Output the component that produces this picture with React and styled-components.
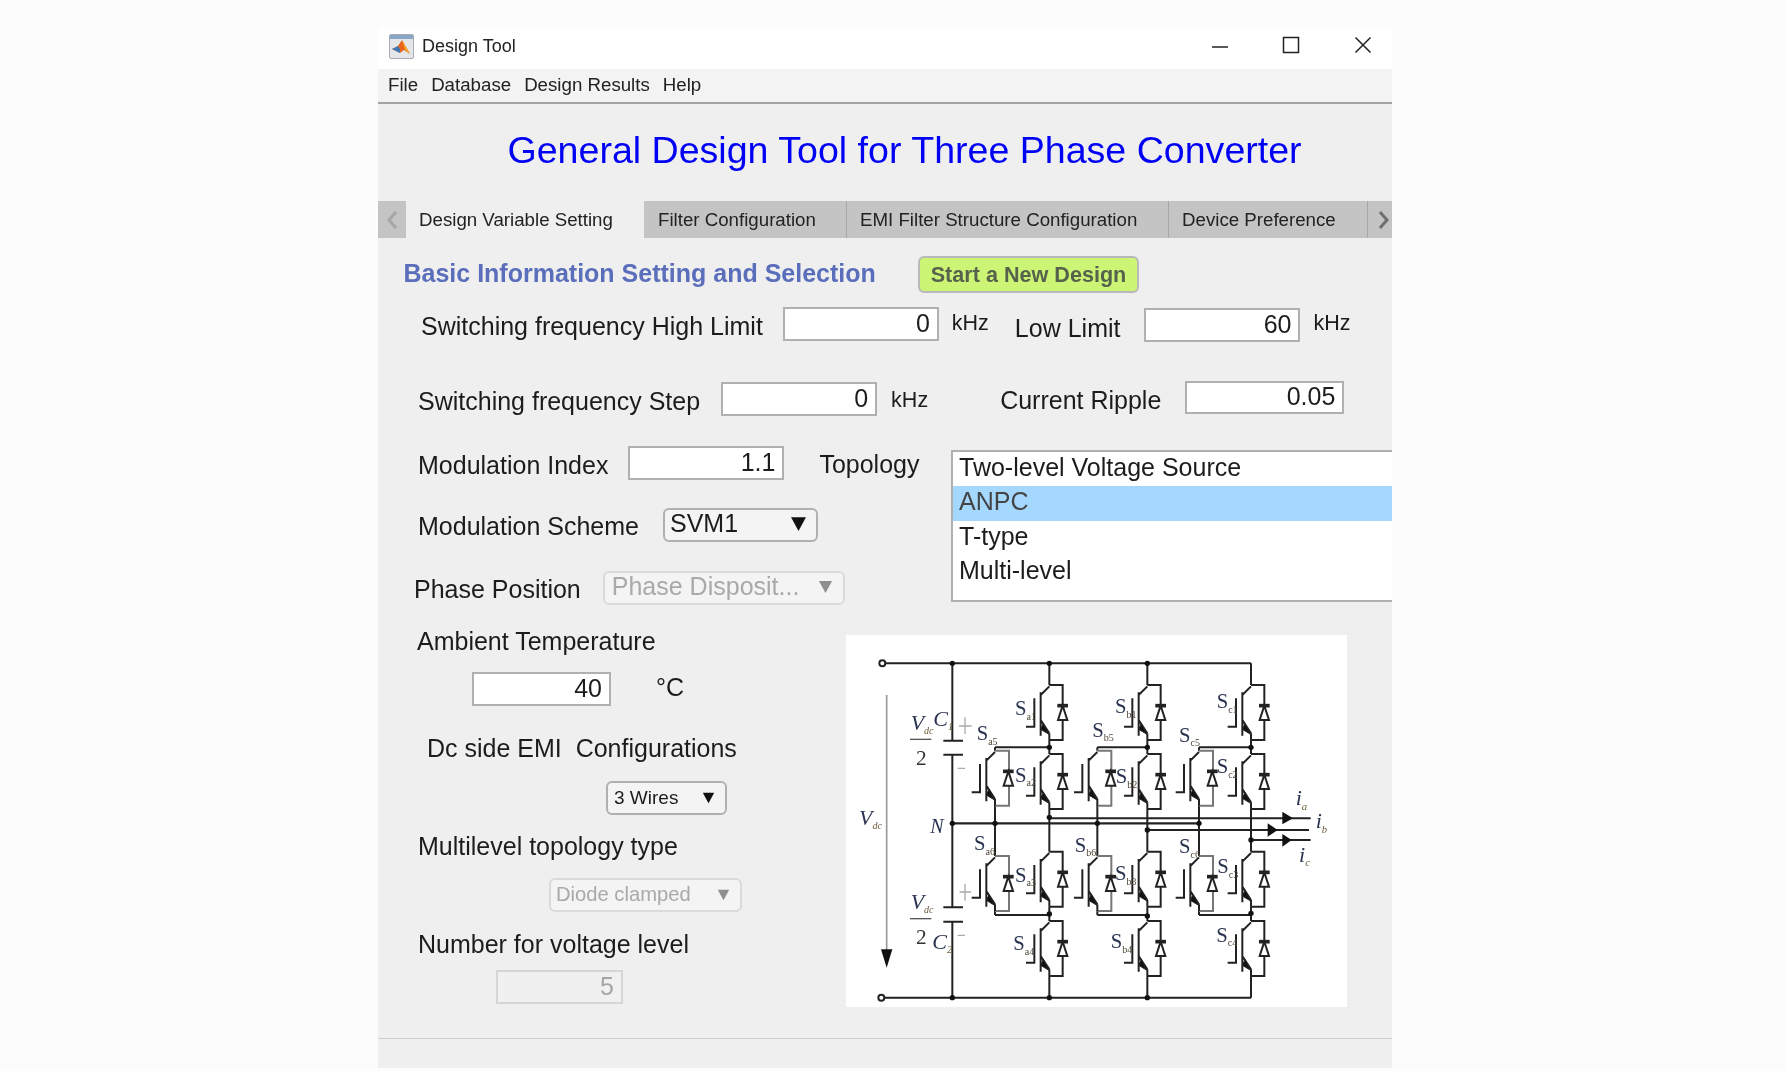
import styled, { createGlobalStyle } from "styled-components";

const GlobalStyle = createGlobalStyle`
  html, body {
    margin: 0;
    background: #fcfcfc;
    font-family: "Liberation Sans", Arial, sans-serif;
    color: #1c1c1c;
  }
`;

const Page = styled.div`
  width: 1786px;
  height: 1071px;
  padding: 28px 0 0 378px;
  box-sizing: border-box;
  overflow: hidden;
`;

const Window = styled.div`
  width: 1014px;
  height: 1040px;
  background: #efefef;
  filter: blur(0.45px);
`;

const TitleBar = styled.div`
  height: 41px;
  padding: 0 0 4px 11px;
  box-sizing: border-box;
  background: #fff;
  display: flex;
  align-items: center;
  font-size: 18px;
  color: #222;
`;

const TitleText = styled.span`
  margin-left: 8px;
  flex: 1;
`;

const WinButton = styled.svg`
  width: 18px;
  height: 18px;
  margin-right: ${(p) => p.$mr}px;
  margin-bottom: 4px;
  fill: none;
  stroke: #222;
  stroke-width: 1.5;
`;

const MenuBar = styled.div`
  height: 31px;
  padding: 0 0 2px 10px;
  background: #f3f3f3;
  border-bottom: 2px solid #a2a2a2;
  display: flex;
  align-items: center;
  gap: 13px;
  font-size: 18.7px;
  color: #222;
`;

const Heading = styled.h1`
  height: 97px;
  margin: 0;
  padding: 23px 0 0 129.5px;
  box-sizing: border-box;
  font-size: 37.57px;
  line-height: 46px;
  font-weight: 400;
  color: #0000f5;
`;

const TabBar = styled.div`
  height: 37px;
  background: #c4c4c4;
  display: flex;
  align-items: stretch;
  font-size: 18.7px;
  color: #222;
`;

const TabArrow = styled.div`
  width: ${(p) => p.$w}px;
  padding-left: ${(p) => p.$pl || 0}px;
  box-sizing: border-box;
  display: flex;
  align-items: center;
  justify-content: center;
  color: ${(p) => p.$color};
`;

const Tab = styled.div`
  width: ${(p) => p.$w}px;
  padding-left: ${(p) => p.$pl}px;
  box-sizing: border-box;
  display: flex;
  align-items: center;
  background: ${(p) => (p.$active ? "#efefef" : "transparent")};
  border-right: ${(p) => (p.$divider ? "1px solid #a8a8a8" : "none")};
`;

const Panel = styled.div`
  height: 800px;
  overflow: hidden;
`;

const Row = styled.div`
  display: flex;
  align-items: flex-start;
  margin-top: ${(p) => p.$mt || 0}px;
  height: ${(p) => p.$h || 34}px;
`;

const SectionTitle = styled.div`
  margin-left: 25.5px;
  width: 514.5px;
  font-size: 25px;
  line-height: 35px;
  font-weight: 700;
  color: #5a6ebb;
`;

const StartButton = styled.button`
  width: 221px;
  height: 37px;
  padding: 0;
  background: #ccf576;
  border: 2px solid #b9b9b9;
  border-radius: 6px;
  font-family: inherit;
  font-size: 21.6px;
  font-weight: 700;
  color: #56624c;
`;

const Label = styled.span`
  margin-left: ${(p) => p.$ml || 0}px;
  margin-top: ${(p) => p.$top || 0}px;
  font-size: ${(p) => p.$size || 25}px;
  line-height: 34px;
  white-space: pre;
  color: #1c1c1c;
`;

const Field = styled.input`
  width: ${(p) => p.$w}px;
  height: ${(p) => p.$h || 34}px;
  margin-left: ${(p) => p.$ml || 0}px;
  margin-top: ${(p) => p.$top || 0}px;
  padding: 0 7px 2px 0;
  box-sizing: border-box;
  flex: none;
  text-align: right;
  font-family: inherit;
  font-size: 25px;
  color: #1c1c1c;
  background: #fff;
  border: 2px solid #b0b0b0;
  border-radius: 0;
  outline: none;
  &:disabled {
    color: #a6a6a6;
    background: #f0f0f0;
    border-color: #d6d6d6;
  }
`;

const Select = styled.div`
  width: ${(p) => p.$w}px;
  height: ${(p) => p.$h || 34}px;
  margin-left: ${(p) => p.$ml || 0}px;
  padding: 0 ${(p) => p.$arrowRight || 10}px ${(p) => p.$pb ?? 3}px ${(p) => p.$pl || 5}px;
  box-sizing: border-box;
  flex: none;
  display: flex;
  align-items: center;
  justify-content: space-between;
  font-size: ${(p) => p.$size || 25}px;
  color: ${(p) => (p.$disabled ? "#a9a9a9" : "#1c1c1c")};
  background: #f4f4f4;
  border: 2px solid ${(p) => (p.$disabled ? "#dadada" : "#b0b0b0")};
  border-radius: 6px;
`;

const Arrow = styled.svg`
  width: ${(p) => p.$w}px;
  height: ${(p) => p.$w}px;
  fill: ${(p) => (p.$disabled ? "#8f8f8f" : "#111")};
`;

const Columns = styled.div`
  display: grid;
  grid-template-columns: ${(p) => p.$left}px ${(p) => p.$right}px;
  margin-top: ${(p) => p.$mt}px;
`;

const Stack = styled.div`
  display: flex;
  flex-direction: column;
`;

const ListBox = styled.div`
  height: 152px;
  margin-top: 4px;
  box-sizing: border-box;
  background: #fff;
  border: 2px solid #b0b0b0;
  border-right: none;
  font-size: 25px;
  color: #1c1c1c;
`;

const ListItem = styled.div`
  height: 34.4px;
  line-height: 31.5px;
  padding-left: 6px;
  background: ${(p) => (p.$selected ? "#a5d8ff" : "transparent")};
  color: ${(p) => (p.$selected ? "#444" : "inherit")};
`;

const Diagram = styled.svg`
  display: block;
  width: 501px;
  height: 372px;
  margin-top: 12px;
  background: #fff;
  filter: blur(0.6px);
  font-family: "Liberation Serif", "Times New Roman", serif;
`;

const Footer = styled.div`
  height: 30px;
  border-top: 1px solid #cfcfcf;
  box-sizing: border-box;
`;

function MatlabIcon() {
  return (
    <svg width="25" height="25" viewBox="0 0 25 25">
      <rect x="0.5" y="0.5" width="24" height="24" rx="1.5" fill="#e4e6ea" stroke="#a9adb3" />
      <rect x="1" y="1" width="23" height="4" fill="#8aa6c6" />
      <path d="M3 15 L9 12 L13 6 L17 13 L21 20 L15 16 L11 19 Z" fill="#e8641c" />
      <path d="M3 15 L9 12 L11 15 L11 19 Z" fill="#3f78b5" />
      <path d="M13 6 L17 13 L21 20 L16 16 Z" fill="#f4a62a" />
    </svg>
  );
}

function DownArrow({ size, disabled }) {
  return (
    <Arrow $w={size} $disabled={disabled} viewBox="0 0 16 16">
      <path d="M1 2 H15 L8 15 Z" />
    </Arrow>
  );
}

// one IGBT with its antiparallel diode, x = rail, y = collector
function Igbt({ x, y, light, h = 165 }) {
  return (
    <g transform={`translate(${x} ${y})`}>
      <path d={`M0 0 H${light ? 42 : 40} V${h} H0`} stroke={light ? "#777" : "#222"} />
      <path d="M0 4 L-26 30 M-26 22 V152 M-45 40 V125 H-70 M-26 105 L0 145" />
      <path d={`M0 145 V${h}`} />
      <path d="M-18 116 L-1 148 L-26 133 Z" fill="#111" strokeWidth="3" />
      <path d="M40 62 L26 105 H54 Z" fill="#fff" strokeWidth="6" />
      <path d="M24 62 H56" strokeWidth="11" />
    </g>
  );
}

function SwitchName({ x, y, sub }) {
  return (
    <text x={x} y={y} fontSize="62" fill="#2a3350" stroke="none">
      S
      <tspan dy="14" fontSize="30" fill="#4d4636">
        {sub}
      </tspan>
    </text>
  );
}

function Fraction({ x, y }) {
  return (
    <g>
      <text x={x} y={y} fontSize="66" fontStyle="italic" fill="#2a3350" stroke="none">
        V
        <tspan dy="12" fontSize="30" fill="#6b5a3c">
          dc
        </tspan>
      </text>
      <path d={`M${x - 2} ${y + 28} h64`} stroke="#555" strokeWidth="4" />
      <text x={x + 16} y={y + 104} fontSize="64" fill="#333" stroke="none">
        2
      </text>
    </g>
  );
}

const names = [
  [528, 255, "a1"], [828, 250, "b1"], [1133, 235, "c1"],
  [413, 330, "a5"], [760, 320, "b5"], [1020, 335, "c5"],
  [528, 455, "a2"], [830, 460, "b2"], [1133, 430, "c2"],
  [405, 660, "a6"], [707, 665, "b6"], [1020, 670, "c6"],
  [528, 755, "a3"], [828, 750, "b3"], [1135, 730, "c3"],
  [523, 960, "a4"], [815, 955, "b4"], [1132, 935, "c4"],
];

function Converter() {
  const outer = [631, 925, 1236];
  const inner = [468, 775, 1080];
  return (
    <Diagram viewBox="21 15 1503 1116">
      <g fill="none" stroke="#222" strokeWidth="6">
        <path d="M140 100 H1236 M137 1103 H1236" />
        <circle cx="130" cy="100" r="9" />
        <circle cx="127" cy="1103" r="9" />
        <path d="M340 100 V332 M313 332 H372 M313 374 H372 M340 374 V832 M313 832 H372 M313 875 H372 M340 875 V1103" />
        <path d="M340 580 H1080" strokeWidth="7" />
        <path d="M631 565 H1415 M925 600 H1410 M1236 630 H1415" />
        {outer.map((x) => (
          <g key={x}>
            <path d={`M${x} 100 V165 M${x} 330 V372 M${x} 537 V665 M${x} 830 V873 M${x} 1038 V1103`} />
            <Igbt x={x} y={165} />
            <Igbt x={x} y={372} />
            <Igbt x={x} y={665} />
            <Igbt x={x} y={873} />
          </g>
        ))}
        {inner.map((x, i) => (
          <g key={x}>
            <path d={`M${x} 352 H${outer[i]} M${x} 855 H${outer[i]} M${x} 352 V362 M${x} 525 V678 M${x} 843 V855`} />
            <Igbt x={x} y={362} light />
            <Igbt x={x} y={678} light />
          </g>
        ))}
        <path d="M143 195 V965" stroke="#999" strokeWidth="5" />
        <path d="M126 958 H160 L143 1013 Z" fill="#111" stroke="none" />
        <path d="M1330 545 L1362 565 L1330 583 Z M1286 580 L1316 600 L1286 620 Z M1330 612 L1358 630 L1330 650 Z" fill="#111" stroke="none" />
        <path d="M360 288 H398 M378 262 V312 M356 415 H378 M362 786 H396 M378 762 V812 M356 916 H378" stroke="#aaa" strokeWidth="4" />
        <g fill="#111" stroke="none">
          {[[340, 100], [631, 100], [925, 100], [340, 1103], [631, 1103], [925, 1103], [631, 352], [925, 352], [1236, 352], [631, 852], [925, 858], [1236, 850], [340, 580], [468, 580], [775, 580], [1080, 580], [631, 562], [925, 600], [1236, 630]].map(([cx, cy]) => (
            <circle key={`${cx}-${cy}`} cx={cx} cy={cy} r="8" />
          ))}
        </g>
      </g>
      {names.map(([x, y, sub]) => (
        <SwitchName key={sub} x={x} y={y} sub={sub} />
      ))}
      <Fraction x={215} y={300} />
      <Fraction x={215} y={838} />
      <text x="60" y="585" fontSize="66" fontStyle="italic" fill="#2a3350">
        V
        <tspan dy="12" fontSize="30" fill="#6b5a3c">dc</tspan>
      </text>
      <text x="283" y="288" fontSize="66" fontStyle="italic" fill="#2a3350">
        C
        <tspan dy="12" fontSize="30" fill="#6b5a3c">1</tspan>
      </text>
      <text x="280" y="958" fontSize="66" fontStyle="italic" fill="#2a3350">
        C
        <tspan dy="12" fontSize="30" fill="#6b5a3c">2</tspan>
      </text>
      <text x="274" y="610" fontSize="60" fontStyle="italic" fill="#2a3350">N</text>
      <text x="1370" y="525" fontSize="66" fontStyle="italic" fill="#2a3350">
        i
        <tspan dy="14" fontSize="32" fill="#6b5a3c">a</tspan>
      </text>
      <text x="1430" y="595" fontSize="66" fontStyle="italic" fill="#2a3350">
        i
        <tspan dy="14" fontSize="32" fill="#6b5a3c">b</tspan>
      </text>
      <text x="1380" y="695" fontSize="66" fontStyle="italic" fill="#2a3350">
        i
        <tspan dy="14" fontSize="32" fill="#6b5a3c">c</tspan>
      </text>
    </Diagram>
  );
}

export default function App() {
  return (
    <>
      <GlobalStyle />
      <Page>
        <Window>
          <TitleBar>
            <MatlabIcon />
            <TitleText>Design Tool</TitleText>
            <WinButton $mr={53} viewBox="0 0 18 18">
              <path d="M1 11 H17" />
            </WinButton>
            <WinButton $mr={54} viewBox="0 0 18 18">
              <rect x="1.5" y="1.5" width="15" height="15" />
            </WinButton>
            <WinButton $mr={20} viewBox="0 0 18 18">
              <path d="M1.5 1.5 L16.5 16.5 M16.5 1.5 L1.5 16.5" />
            </WinButton>
          </TitleBar>
          <MenuBar>
            <span>File</span>
            <span>Database</span>
            <span>Design Results</span>
            <span>Help</span>
          </MenuBar>
          <Heading>General Design Tool for Three Phase Converter</Heading>
          <TabBar>
            <TabArrow $w={28} $color="#a5a5a5">
              <svg width="12" height="20" viewBox="0 0 12 20" fill="none" stroke="currentColor" strokeWidth="3">
                <path d="M10 2 L3 10 L10 18" />
              </svg>
            </TabArrow>
            <Tab $w={238} $pl={13} $active>Design Variable Setting</Tab>
            <Tab $w={203} $pl={14} $divider>Filter Configuration</Tab>
            <Tab $w={322} $pl={13} $divider>EMI Filter Structure Configuration</Tab>
            <Tab $w={199} $pl={13} $divider>Device Preference</Tab>
            <TabArrow $w={24} $pl={7} $color="#6f6f6f">
              <svg width="12" height="20" viewBox="0 0 12 20" fill="none" stroke="currentColor" strokeWidth="3">
                <path d="M2 2 L9 10 L2 18" />
              </svg>
            </TabArrow>
          </TabBar>
          <Panel>
            <Row $mt={18} $h={37}>
              <SectionTitle>Basic Information Setting and Selection</SectionTitle>
              <StartButton>Start a New Design</StartButton>
            </Row>
            <Row $mt={14} $h={36}>
              <Label $ml={43} $top={2}>Switching frequency High Limit</Label>
              <Field $ml={20} $w={156} defaultValue="0" readOnly />
              <Label $ml={13} $top={-1} $size={21.5}>kHz</Label>
              <Label $ml={26} $top={4}>Low Limit</Label>
              <Field $ml={24} $top={1} $w={156} defaultValue="60" readOnly />
              <Label $ml={13} $top={-1} $size={21.5}>kHz</Label>
            </Row>
            <Row $mt={38}>
              <Label $ml={40} $top={3}>Switching frequency Step</Label>
              <Field $ml={21} $top={1} $w={156} defaultValue="0" readOnly />
              <Label $ml={14} $top={2} $size={21.5}>kHz</Label>
              <Label $ml={72} $top={2}>Current Ripple</Label>
              <Field $ml={24} $w={159} $h={33} defaultValue="0.05" readOnly />
            </Row>
            <Columns $left={573} $right={441} $mt={31}>
              <Stack>
                <Row>
                  <Label $ml={40} $top={2}>Modulation Index</Label>
                  <Field $ml={20} $w={156} defaultValue="1.1" readOnly />
                  <Label $ml={35} $top={1}>Topology</Label>
                </Row>
                <Row $mt={28}>
                  <Label $ml={40} $top={1}>Modulation Scheme</Label>
                  <Select $ml={24} $w={155} $arrowRight={9}>
                    SVM1
                    <DownArrow size={17} />
                  </Select>
                </Row>
                <Row $mt={29}>
                  <Label $ml={36} $top={1}>Phase Position</Label>
                  <Select $ml={22} $w={242} $pl={7} $disabled>
                    Phase Disposit...
                    <DownArrow size={15} disabled />
                  </Select>
                </Row>
              </Stack>
              <ListBox>
                <ListItem>Two-level Voltage Source</ListItem>
                <ListItem $selected>ANPC</ListItem>
                <ListItem>T-type</ListItem>
                <ListItem>Multi-level</ListItem>
              </ListBox>
            </Columns>
            <Columns $left={468} $right={501} $mt={18}>
              <Stack>
                <Row>
                  <Label $ml={39} $top={1}>Ambient Temperature</Label>
                </Row>
                <Row $mt={15}>
                  <Field $ml={94} $w={139} defaultValue="40" readOnly />
                  <Label $ml={45} $top={-2}>°C</Label>
                </Row>
                <Row $mt={25}>
                  <Label $ml={49}>{"Dc side EMI  Configurations"}</Label>
                </Row>
                <Row $mt={16}>
                  <Select $ml={228} $w={121} $size={19} $pl={6} $pb={1} $arrowRight={10}>
                    3 Wires
                    <DownArrow size={13} />
                  </Select>
                </Row>
                <Row $mt={14}>
                  <Label $ml={40}>Multilevel topology type</Label>
                </Row>
                <Row $mt={15}>
                  <Select $ml={171} $w={193} $size={20.2} $pb={1} $disabled>
                    Diode clamped
                    <DownArrow size={13} disabled />
                  </Select>
                </Row>
                <Row $mt={15}>
                  <Label $ml={40}>Number for voltage level</Label>
                </Row>
                <Row $mt={9}>
                  <Field $ml={118} $w={127} defaultValue="5" disabled />
                </Row>
              </Stack>
              <Converter />
            </Columns>
          </Panel>
          <Footer />
        </Window>
      </Page>
    </>
  );
}
